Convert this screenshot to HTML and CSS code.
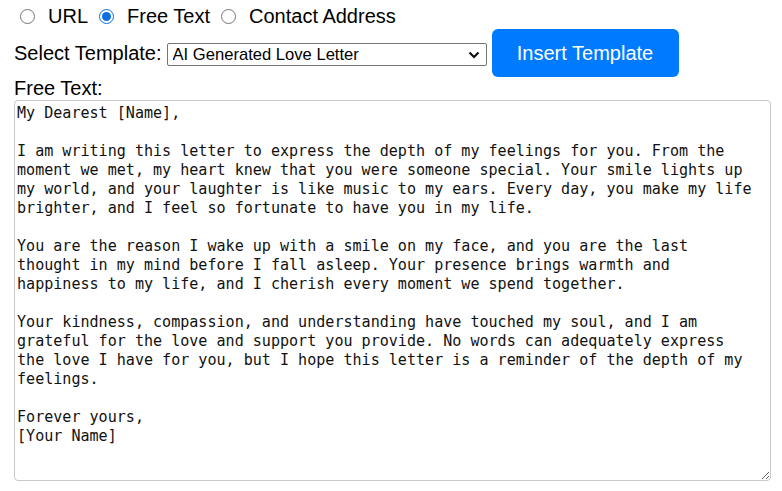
FILE: index.html
```html
<!DOCTYPE html>
<html>
<head>
<meta charset="utf-8">
<link rel="stylesheet" href="styles.css">
</head>
<body>
<div class="page">
  <div class="modes">
    <input class="radio first" type="radio" name="mode" id="m-url">
    <label for="m-url">URL</label>
    <input class="radio" type="radio" name="mode" id="m-free" checked>
    <label for="m-free">Free Text</label>
    <input class="radio" type="radio" name="mode" id="m-contact">
    <label for="m-contact">Contact Address</label>
  </div>
  <div class="template-row">
    <span class="label">Select Template:</span>
    <span class="select-wrap">
      <select class="select">
        <option>AI Generated Love Letter</option>
      </select>
      <svg class="chev" width="12" height="8" viewBox="0 0 12 8"><path d="M1.5 1.5 L6 6 L10.5 1.5" fill="none" stroke="#111" stroke-width="2.2"/></svg>
    </span>
    <button class="btn">Insert Template</button>
  </div>
  <div class="label free-label">Free Text:</div>
  <textarea class="text" wrap="off" spellcheck="false">My Dearest [Name],

I am writing this letter to express the depth of my feelings for you. From the
moment we met, my heart knew that you were someone special. Your smile lights up
my world, and your laughter is like music to my ears. Every day, you make my life
brighter, and I feel so fortunate to have you in my life.

You are the reason I wake up with a smile on my face, and you are the last
thought in my mind before I fall asleep. Your presence brings warmth and
happiness to my life, and I cherish every moment we spend together.

Your kindness, compassion, and understanding have touched my soul, and I am
grateful for the love and support you provide. No words can adequately express
the love I have for you, but I hope this letter is a reminder of the depth of my
feelings.

Forever yours,
[Your Name]</textarea>
</div>
</body>
</html>
```

FILE: styles.css
```css
html, body {
  margin: 0;
  padding: 0;
  background: #fff;
}
.page {
  padding: 0 0 0 14px;
  font-family: "Liberation Sans", Arial, sans-serif;
  font-size: 20px;
  color: #000;
}
.modes {
  display: flex;
  align-items: center;
  height: 32px;
}
.radio {
  width: 15px;
  height: 15px;
  margin: 0 13px 0 11px;
  accent-color: #0b6fe0;
}
.radio.first {
  margin-left: 6px;
}
.modes label {
  line-height: 32px;
}
.template-row {
  display: flex;
  align-items: center;
  margin-top: -3px;
  height: 48px;
}
.label {
  line-height: 24px;
}
.select-wrap {
  position: relative;
  display: inline-block;
  margin-left: 5px;
  margin-top: 3px;
}
.select {
  appearance: none;
  -webkit-appearance: none;
  width: 320px;
  height: 23px;
  border: 1px solid #767676;
  border-radius: 2px;
  background: #fff;
  font-family: "Liberation Sans", Arial, sans-serif;
  font-size: 16.6px;
  color: #000;
  padding: 0 0 0 5px;
  display: block;
}
.chev {
  position: absolute;
  right: 7px;
  top: 8px;
  pointer-events: none;
}
.btn {
  margin-left: 5px;
  width: 187px;
  height: 48px;
  border: none;
  border-radius: 6px;
  background: #007bff;
  color: #fff;
  font-family: "Liberation Sans", Arial, sans-serif;
  font-size: 20px;
  padding: 0;
}
.free-label {
  margin-top: 0px;
  line-height: 23px;
}
.text {
  display: block;
  box-sizing: border-box;
  width: 757px;
  height: 381px;
  margin: 0;
  padding: 3px 2px;
  border: 1px solid #c8c8c8;
  border-radius: 4px;
  font-family: "DejaVu Sans Mono", monospace;
  font-size: 15.07px;
  line-height: 19px;
  color: #111;
  background: #fff;
  outline: none;
}
```
